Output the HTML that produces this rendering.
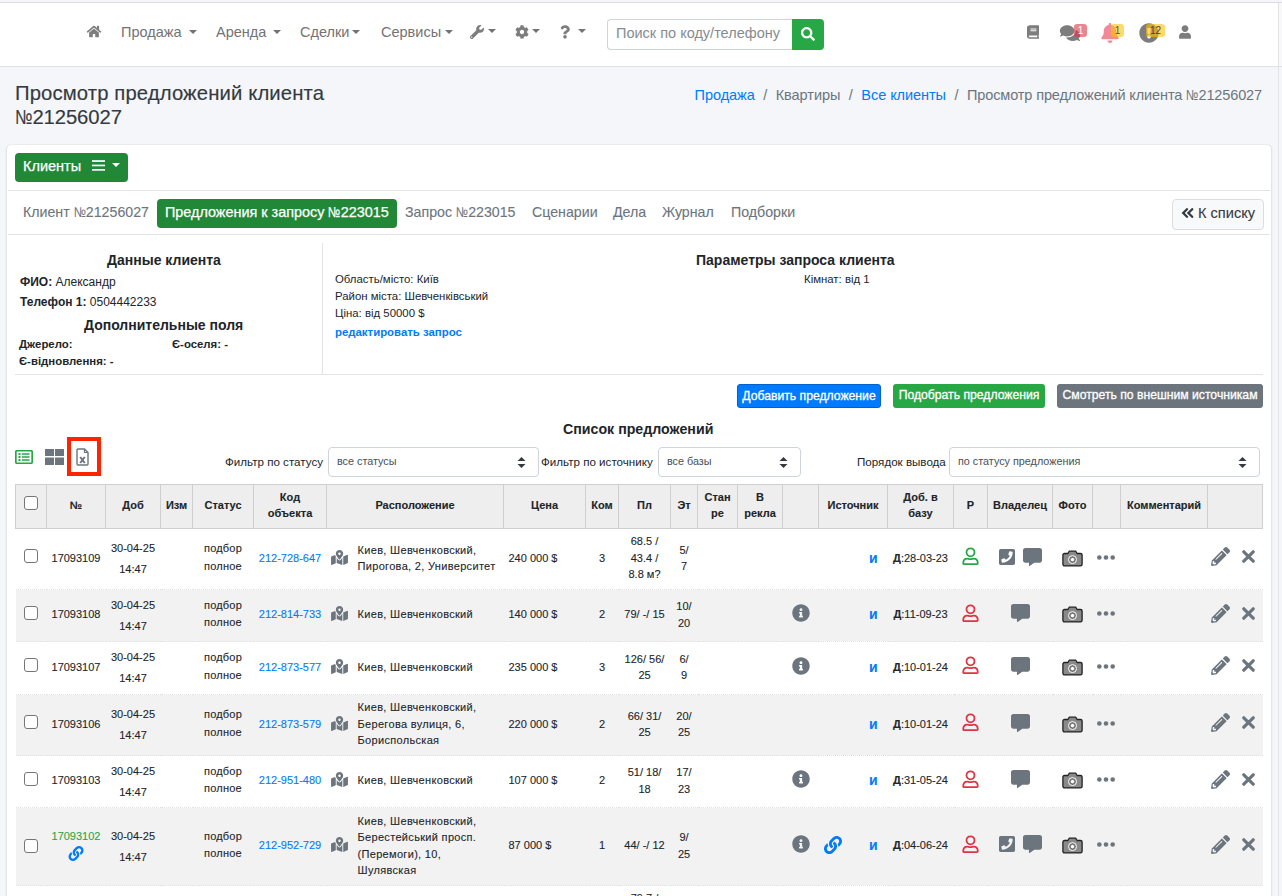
<!DOCTYPE html>
<html><head><meta charset="utf-8">
<style>
*{box-sizing:border-box}
html,body{margin:0;padding:0}
body{width:1282px;height:896px;overflow:hidden;position:relative;background:#f4f6f9;font-family:"Liberation Sans",sans-serif;color:#212529}
.abs{position:absolute}
.nav{position:absolute;left:0;top:2px;width:1282px;height:65px;background:#fff;border-top:1px solid #dcdce0;border-bottom:1px solid #dee2e6}
.ni{position:absolute;top:24px;font-size:14.5px;line-height:17px;color:#737373;white-space:nowrap}
.caret{display:inline-block;width:0;height:0;border-left:4px solid transparent;border-right:4px solid transparent;border-top:4.5px solid #737373;vertical-align:3px}
.title{position:absolute;left:15px;top:81px;font-size:20.3px;letter-spacing:.12px;-webkit-text-stroke:.15px currentColor;line-height:24px;color:#343a40}
.bc{position:absolute;right:20px;top:87px;font-size:14.5px;letter-spacing:-.05px;line-height:17px;color:#6c757d;white-space:nowrap}
.bc a{color:#007bff;text-decoration:none}
.bc .sep{padding:0 8.5px;color:#6c757d}
.card{position:absolute;left:7px;top:145px;width:1264px;height:800px;background:#fff;border-radius:4px;box-shadow:0 0 1px rgba(0,0,0,.2),0 1px 3px rgba(0,0,0,.15)}
.btn-cl{position:absolute;left:15px;top:153px;width:113px;height:29px;background:#218838;border-radius:4px;color:#fff;font-size:14.5px;line-height:27px;padding-left:8px;-webkit-text-stroke:.25px #fff}
.hr{position:absolute;height:1px;background:#e3e3e3}
.tab{position:absolute;top:204px;font-size:14.2px;line-height:17px;color:#6c757d;white-space:nowrap;-webkit-text-stroke:.1px currentColor}
.pill{position:absolute;left:157px;top:199px;width:240px;height:29px;background:#218838;border-radius:4px}
.tk{position:absolute;left:1172px;top:199px;width:92px;height:31px;background:#f8f9fa;border:1px solid #ddd;border-radius:4px}
.t11{font-size:11.4px;line-height:17px;white-space:nowrap}
.b14{font-weight:bold;font-size:14px;line-height:17px;white-space:nowrap}
.sbtn{position:absolute;top:384px;height:24px;border-radius:3px;color:#fff;font-size:12.2px;line-height:22px;-webkit-text-stroke:.3px #fff;text-align:center;white-space:nowrap}
.lbl{position:absolute;top:454.5px;font-size:11.6px;line-height:14px;color:#212529;white-space:nowrap}
.sel{position:absolute;top:447px;height:30px;border:1px solid #ced4da;border-radius:4px;background:#fff;font-size:10.8px;line-height:26px;padding-left:8px;color:#495057;white-space:nowrap}
.sel svg{position:absolute;right:12px;top:9px}
table.tb{position:absolute;left:15px;top:484px;border-collapse:collapse;table-layout:fixed;width:1248px;font-size:11px;color:#212529;-webkit-text-stroke:.1px currentColor}
.tb th{background:#eee;border:1px solid #cfcfcf;font-weight:bold;font-size:11px;line-height:16px;height:44px;padding:0 2px 4px;text-align:center;vertical-align:middle}
.tb td{vertical-align:middle;text-align:center;padding:0 4px 2px;line-height:16.5px;border-top:1px dotted #e2e2e2}
.tb .cb{position:relative;top:-2.5px}
.tb td .ico{position:relative;top:-1.5px}
.tb td.loc .ico{top:-1px}
.tb td .cam{top:0}
.tb tr.g td{background:#f2f2f2}
.cb{display:inline-block;width:14px;height:14px;border:1px solid #767676;border-radius:3px;background:#fff;vertical-align:middle}
.lnk{color:#007bff}
.dt div{line-height:21px;position:relative;top:1px}
.ico{display:inline-block;vertical-align:middle}
.tb td.loc{text-align:left;padding:0 4px 2px}
.lf{display:flex;align-items:center}
.lf svg{margin:0 10px 0 0;flex:none}
.lt{letter-spacing:.32px}
.tb td.pr{text-align:left;padding-left:5px}
.tb td.src{text-align:right;padding-right:10px;position:relative}
.lk6{position:absolute;left:4px;top:50%;margin-top:-9px}
.tb td.dd{white-space:nowrap;padding:0 0 2px}
.tb td.et{padding:0 3px 2px}
.tb td.act{padding:0 6px 2px 2px;white-space:nowrap}
.no{display:inline-block;transform:scaleX(.8);transform-origin:0 0;margin-right:-.215em}
</style></head><body>

<!-- NAVBAR -->
<div class="nav"></div>
<svg class="abs" style="left:86px;top:25px" width="16" height="13" viewBox="0 0 576 512"><path fill="#7d7d7d" d="M280.37 148.26L96 300.11V464a16 16 0 0 0 16 16l112.06-.29a16 16 0 0 0 15.92-16V368a16 16 0 0 1 16-16h64a16 16 0 0 1 16 16v95.64a16 16 0 0 0 16 16.05L464 480a16 16 0 0 0 16-16V300L295.67 148.26a12.190 12.190 0 0 0-15.3 0zM571.6 251.47L488 182.56V44.05a12 12 0 0 0-12-12h-56a12 12 0 0 0-12 12v72.61L318.47 43a48 48 0 0 0-61 0L4.34 251.47a12 12 0 0 0-1.6 16.9l25.5 31A12 12 0 0 0 45.15 301l235.22-193.74a12.19 12.19 0 0 1 15.3 0L530.9 301a12 12 0 0 0 16.9-1.6l25.5-31a12 12 0 0 0-1.7-16.93z"/></svg>
<div class="ni" style="left:121px">Продажа <span class="caret" style="margin-left:3px"></span></div>
<div class="ni" style="left:216px">Аренда <span class="caret" style="margin-left:3px"></span></div>
<div class="ni" style="left:300px">Сделки<span class="caret" style="margin-left:3px"></span></div>
<div class="ni" style="left:381px">Сервисы<span class="caret" style="margin-left:4px"></span></div>
<svg class="abs" style="left:470px;top:25px" width="14" height="14" viewBox="0 0 512 512"><path fill="#7d7d7d" d="M507.73 109.1c-2.24-9.030-13.54-12.09-20.120-5.51l-74.36 74.36-67.88-11.31-11.31-67.88 74.36-74.36c6.62-6.62 3.43-17.9-5.66-20.16-47.38-11.74-99.55.91-136.58 37.93-39.64 39.64-50.55 97.1-34.05 147.2L18.74 402.76c-24.99 24.99-24.99 65.51 0 90.5 24.99 24.99 65.51 24.99 90.5 0l213.21-213.21c50.12 16.71 107.47 5.68 147.37-34.22 37.07-37.07 49.7-89.32 37.91-136.73zM64 472c-13.25 0-24-10.75-24-24 0-13.26 10.75-24 24-24s24 10.74 24 24c0 13.250-10.75 24-24 24z"/></svg>
<span class="caret abs" style="left:488px;top:29px"></span>
<svg class="abs" style="left:515px;top:25px" width="14" height="14" viewBox="0 0 512 512"><path fill="#7d7d7d" d="M487.4 315.7l-42.6-24.6c4.3-23.2 4.3-47 0-70.2l42.6-24.6c4.9-2.8 7.1-8.6 5.5-14-11.1-35.6-30-67.8-54.7-94.6-3.8-4.1-10-5.1-14.8-2.3L380.8 110c-17.9-15.4-38.5-27.3-60.8-35.1V25.8c0-5.6-3.9-10.5-9.4-11.7-36.7-8.2-74.3-7.8-109.2 0-5.5 1.2-9.4 6.1-9.4 11.7V75c-22.2 7.9-42.8 19.8-60.8 35.1L88.7 85.5c-4.9-2.8-11-1.9-14.8 2.3-24.7 26.7-43.6 58.9-54.7 94.6-1.7 5.4.6 11.2 5.5 14L67.3 221c-4.3 23.2-4.3 47 0 70.2l-42.6 24.6c-4.9 2.8-7.1 8.6-5.5 14 11.1 35.6 30 67.8 54.7 94.6 3.8 4.1 10 5.1 14.8 2.3l42.6-24.6c17.9 15.4 38.5 27.3 60.8 35.1v49.2c0 5.6 3.9 10.5 9.4 11.7 36.7 8.2 74.3 7.8 109.2 0 5.5-1.2 9.4-6.1 9.4-11.7v-49.2c22.2-7.9 42.8-19.8 60.8-35.1l42.6 24.6c4.9 2.8 11 1.9 14.8-2.3 24.7-26.7 43.6-58.9 54.7-94.6 1.5-5.5-.7-11.3-5.6-14.1zM256 336c-44.1 0-80-35.9-80-80s35.9-80 80-80 80 35.9 80 80-35.9 80-80 80z"/></svg>
<span class="caret abs" style="left:532px;top:29px"></span>
<svg class="abs" style="left:560px;top:25px" width="10" height="14" viewBox="0 0 384 512"><path fill="#7d7d7d" d="M202.021 0C122.202 0 70.503 32.703 29.914 91.026c-7.363 10.580-5.093 25.086 5.178 32.874l43.138 32.709c10.373 7.865 25.132 6.026 33.253-4.148 25.049-31.381 43.63-49.449 82.757-49.449 30.764 0 68.816 19.799 68.816 49.631 0 22.552-18.617 34.134-48.993 51.164-35.423 19.86-82.299 44.576-82.299 106.405V320c0 13.255 10.745 24 24 24h72.471c13.255 0 24-10.745 24-24v-5.773c0-42.86 125.268-44.645 125.268-160.627C377.504 66.256 286.902 0 202.021 0zM192 373.459c-38.196 0-69.271 31.075-69.271 69.271 0 38.195 31.075 69.27 69.271 69.270s69.271-31.075 69.271-69.271-31.075-69.27-69.271-69.27z"/></svg>
<span class="caret abs" style="left:578px;top:29px"></span>
<div class="abs" style="left:607px;top:19px;width:186px;height:31px;border:1px solid #ced4da;border-right:0;border-radius:4px 0 0 4px;background:#fff;font-size:14.5px;line-height:27px;padding-left:8px;color:#868b91;white-space:nowrap;overflow:hidden">Поиск по коду/телефону</div>
<div class="abs" style="left:792px;top:19px;width:32px;height:31px;background:#28a745;border-radius:0 4px 4px 0"></div>
<svg class="abs" style="left:801px;top:27px" width="14" height="14" viewBox="0 0 512 512"><path fill="#fff" d="M505 442.7L405.3 343c-4.5-4.5-10.6-7-17-7H372c27.6-35.3 44-79.7 44-128C416 93.1 322.9 0 208 0S0 93.1 0 208s93.1 208 208 208c48.3 0 92.7-16.4 128-44v16.3c0 6.4 2.5 12.5 7 17l99.7 99.7c9.4 9.4 24.6 9.4 33.9 0l28.3-28.3c9.4-9.4 9.4-24.6.1-34zM208 336c-70.7 0-128-57.2-128-128 0-70.7 57.2-128 128-128 70.7 0 128 57.2 128 128 0 70.7-57.2 128-128 128z"/></svg>

<!-- right nav icons -->
<svg class="abs" style="left:1027px;top:25px" width="12" height="14" viewBox="0 0 448 512"><path fill="#7d7d7d" d="M448 360V24c0-13.3-10.7-24-24-24H96C43 0 0 43 0 96v320c0 53 43 96 96 96h328c13.3 0 24-10.7 24-24v-16c0-7.5-3.5-14.3-8.9-18.7-4.2-15.4-4.2-59.3 0-74.7 5.4-4.3 8.9-11.1 8.9-18.6zM128 134c0-3.3 2.7-6 6-6h212c3.3 0 6 2.7 6 6v20c0 3.3-2.7 6-6 6H134c-3.3 0-6-2.7-6-6v-20zm0 64c0-3.3 2.7-6 6-6h212c3.3 0 6 2.7 6 6v20c0 3.3-2.7 6-6 6H134c-3.3 0-6-2.7-6-6v-20zm253.4 250H96c-17.7 0-32-14.3-32-32 0-17.6 14.4-32 32-32h285.4c-1.9 17.1-1.9 46.9 0 64z"/></svg>
<svg class="abs" style="left:1058px;top:24px" width="24" height="18" viewBox="0 0 576 512"><path fill="#7d7d7d" d="M416 192c0-88.4-93.1-160-208-160S0 103.6 0 192c0 34.3 14.1 65.9 38 92-13.4 30.2-35.5 54.2-35.8 54.5-2.2 2.3-2.8 5.7-1.5 8.7S4.8 352 8 352c36.6 0 66.9-12.3 88.7-25 32.2 15.7 70.3 25 111.3 25 114.9 0 208-71.6 208-160zm122 220c23.9-26 38-57.7 38-92 0-66.9-53.5-124.2-129.3-148.1.9 6.6 1.3 13.3 1.3 20.1 0 105.9-107.7 192-240 192-10.8 0-21.3-.8-31.7-1.9C207.8 439.6 281.8 480 368 480c41 0 79.1-9.2 111.3-25 21.8 12.7 52.1 25 88.7 25 3.2 0 6.1-1.9 7.3-4.8 1.3-2.9.7-6.3-1.5-8.7-.3-.3-22.4-24.2-35.8-54.5z"/></svg>
<div class="abs" style="left:1074px;top:24px;width:13px;height:13px;background:rgba(220,53,69,.6);border-radius:3px;color:#fff;font-size:10px;line-height:13px;text-align:center">1</div>
<svg class="abs" style="left:1101px;top:23px" width="18" height="20" viewBox="0 0 448 512"><path fill="#f08a96" d="M224 512c35.32 0 63.97-28.65 63.97-64H160.03c0 35.35 28.65 64 63.97 64zm215.39-149.71c-19.32-20.760-55.47-51.99-55.47-154.29 0-77.7-54.48-139.9-127.94-155.16V32c0-17.67-14.32-32-31.98-32s-31.98 14.33-31.98 32v20.84C118.56 68.1 64.08 130.3 64.08 208c0 102.3-36.15 133.53-55.47 154.29-6 6.45-8.66 14.16-8.61 21.71.11 16.4 12.98 32 32.1 32h383.8c19.12 0 32-15.6 32.1-32 .05-7.55-2.61-15.27-8.61-21.71z"/></svg>
<div class="abs" style="left:1111px;top:24px;width:13px;height:13px;background:rgba(255,193,7,.6);border-radius:3px;color:#555;font-size:10px;line-height:13px;text-align:center">1</div>
<svg class="abs" style="left:1139px;top:23px" width="20" height="20" viewBox="0 0 512 512"><path fill="#7d7d7d" d="M504 256c0 136.997-111.043 248-248 248S8 392.997 8 256C8 119.083 119.043 8 256 8s248 111.083 248 248zm-248 50c-25.405 0-46 20.595-46 46s20.595 46 46 46 46-20.595 46-46-20.595-46-46-46zm-43.673-165.346l7.418 136c.347 6.364 5.609 11.346 11.982 11.346h48.546c6.373 0 11.635-4.982 11.982-11.346l7.418-136c.375-6.874-5.098-12.654-11.982-12.654h-63.383c-6.884 0-12.356 5.78-11.981 12.654z"/></svg>
<div class="abs" style="left:1146px;top:24px;width:19px;height:13px;background:rgba(255,193,7,.6);border-radius:3px;color:#444;font-size:10px;line-height:13px;text-align:center">12</div>
<svg class="abs" style="left:1179px;top:25px" width="12" height="14" viewBox="0 0 448 512"><path fill="#7d7d7d" d="M224 256c70.7 0 128-57.3 128-128S294.7 0 224 0 96 57.3 96 128s57.3 128 128 128zm89.6 32h-16.7c-22.2 10.2-46.9 16-72.9 16s-50.6-5.8-72.9-16h-16.7C60.2 288 0 348.2 0 422.4V464c0 26.5 21.5 48 48 48h352c26.5 0 48-21.5 48-48v-41.6c0-74.2-60.2-134.4-134.4-134.4z"/></svg>
<div class="abs" style="left:1278px;top:3px;width:1px;height:893px;background:#e3e3e8"></div><div class="abs" style="left:1279px;top:3px;width:3px;height:63px;background:#f8f8fa"></div>

<!-- HEADER -->
<div class="title">Просмотр предложений клиента<br><span class="no" style="letter-spacing:0">№</span><span style="letter-spacing:-.1px">21256027</span></div>
<div class="bc"><a>Продажа</a><span class="sep">/</span>Квартиры<span class="sep">/</span><a>Все клиенты</a><span class="sep">/</span><span style="letter-spacing:-.12px">Просмотр предложений клиента <span class="no">№</span>21256027</span></div>

<!-- CARD -->
<div class="card"></div>
<div class="btn-cl">Клиенты
<svg class="abs" style="left:77px;top:7px" width="13" height="11" viewBox="0 0 13 11"><rect y="0.2" width="13" height="1.7" fill="#fff"/><rect y="4.6" width="13" height="1.7" fill="#fff"/><rect y="9" width="13" height="1.7" fill="#fff"/></svg>
<span class="caret abs" style="left:97px;top:10px;border-top-color:#fff"></span>
</div>
<div class="hr" style="left:8px;top:190px;width:1262px"></div>
<div class="tab" style="left:23px">Клиент <span class="no">№</span>21256027</div>
<div class="pill"></div>
<div class="tab" style="left:165px;color:#fff;font-size:14.4px;-webkit-text-stroke:.25px #fff">Предложения к запросу <span class="no">№</span>223015</div>
<div class="tab" style="left:405px">Запрос <span class="no">№</span>223015</div>
<div class="tab" style="left:532px">Сценарии</div>
<div class="tab" style="left:613px">Дела</div>
<div class="tab" style="left:662px">Журнал</div>
<div class="tab" style="left:731px">Подборки</div>
<div class="tk"></div>
<svg class="abs" style="left:1181px;top:207.5px" width="13" height="10" viewBox="0 0 13 10"><path d="M6 1.2L2.2 5 6 8.8M11.2 1.2L7.4 5l3.8 3.8" fill="none" stroke="#343a40" stroke-width="2.3" stroke-linecap="round"/></svg>
<div class="tab" style="left:1198px;top:205px;color:#343a40;font-size:14.6px">К списку</div>
<div class="hr" style="left:8px;top:234px;width:1262px"></div>

<!-- DATA BLOCK -->
<div class="abs" style="left:322px;top:243px;width:1px;height:131px;background:#e3e3e3"></div>
<div class="hr" style="left:15px;top:374px;width:1248px"></div>
<div class="abs b14" style="left:107px;top:252px">Данные клиента</div>
<div class="abs t11" style="left:20px;top:274px;font-size:12px"><b>ФИО:</b> Александр</div>
<div class="abs t11" style="left:20px;top:294px;font-size:12px"><b>Телефон 1:</b> 0504442233</div>
<div class="abs b14" style="left:84px;top:317px">Дополнительные поля</div>
<div class="abs t11" style="left:19px;top:336px;font-weight:bold;font-size:11.4px">Джерело:</div>
<div class="abs t11" style="left:172px;top:336px;font-weight:bold;font-size:11.4px">Є-оселя: -</div>
<div class="abs t11" style="left:19px;top:353px;font-weight:bold;font-size:11.4px">Є-відновлення: -</div>

<div class="abs b14" style="left:696px;top:252px">Параметры запроса клиента</div>
<div class="abs t11" style="left:804px;top:271px">Кімнат: від 1</div>
<div class="abs t11" style="left:335px;top:271px">Область/місто: Київ</div>
<div class="abs t11" style="left:335px;top:288px">Район міста: Шевченківський</div>
<div class="abs t11" style="left:335px;top:305px">Ціна: від 50000 $</div>
<div class="abs t11" style="left:335px;top:324px;font-weight:bold;color:#007bff">редактировать запрос</div>

<!-- BUTTONS -->
<div class="sbtn" style="left:737px;width:144px;background:#007bff;border:1px solid #0062cc">Добавить предложение</div>
<div class="sbtn" style="left:893px;width:152px;background:#28a745">Подобрать предложения</div>
<div class="sbtn" style="left:1057px;width:206px;background:#6c757d">Смотреть по внешним источникам</div>

<div class="abs b14" style="left:563px;top:421px;font-size:14.2px">Список предложений</div>

<!-- view icons -->
<svg class="abs" style="left:15px;top:449px" width="18" height="16" viewBox="0 0 512 512" preserveAspectRatio="none"><path fill="#28a745" d="M464 32H48C21.49 32 0 53.49 0 80v352c0 26.51 21.49 48 48 48h416c26.51 0 48-21.49 48-48V80c0-26.51-21.49-48-48-48zm-6 400H54a6 6 0 0 1-6-6V86a6 6 0 0 1 6-6h404a6 6 0 0 1 6 6v340a6 6 0 0 1-6 6zm-42-92v24c0 6.627-5.373 12-12 12H204c-6.627 0-12-5.373-12-12v-24c0-6.627 5.373-12 12-12h200c6.627 0 12 5.373 12 12zm0-96v24c0 6.627-5.373 12-12 12H204c-6.627 0-12-5.373-12-12v-24c0-6.627 5.373-12 12-12h200c6.627 0 12 5.373 12 12zm0-96v24c0 6.627-5.373 12-12 12H204c-6.627 0-12-5.373-12-12v-24c0-6.627 5.373-12 12-12h200c6.627 0 12 5.373 12 12zm-252 12c0 19.882-16.118 36-36 36s-36-16.118-36-36 16.118-36 36-36 36 16.118 36 36zm0 96c0 19.882-16.118 36-36 36s-36-16.118-36-36 16.118-36 36-36 36 16.118 36 36zm0 96c0 19.882-16.118 36-36 36s-36-16.118-36-36 16.118-36 36-36 36 16.118 36 36z"/></svg>
<svg class="abs" style="left:45px;top:449px" width="19" height="16" viewBox="0 0 19 16"><rect x="0" y="0" width="9" height="7" fill="#6c757d"/><rect x="10" y="0" width="9" height="7" fill="#6c757d"/><rect x="0" y="8.5" width="9" height="7.5" fill="#6c757d"/><rect x="10" y="8.5" width="9" height="7.5" fill="#6c757d"/></svg>
<div class="abs" style="left:67px;top:437px;width:34px;height:39px;border:4px solid #ff2400"></div>
<svg class="abs" style="left:76px;top:448px" width="13" height="18" viewBox="0 0 13 18"><path d="M1 2a1 1 0 0 1 1-1h6.5L12 4.5V16a1 1 0 0 1-1 1H2a1 1 0 0 1-1-1z" fill="none" stroke="#6c757d" stroke-width="1.4"/><path d="M8.5 1v3.5H12" fill="none" stroke="#6c757d" stroke-width="1.2"/><path d="M4.2 9l4.6 6M8.8 9l-4.6 6" stroke="#6c757d" stroke-width="2"/></svg>

<!-- FILTERS -->
<div class="lbl" style="left:225px">Фильтр по статусу</div>
<div class="sel" style="left:328px;width:211px">все статусы<svg width="9" height="11" viewBox="0 0 9 11"><path d="M4.5 0L8.5 4H.5z M4.5 11L.5 7h8z" fill="#343a40"/></svg></div>
<div class="lbl" style="left:541px">Фильтр по источнику</div>
<div class="sel" style="left:658px;width:143px">все базы<svg width="9" height="11" viewBox="0 0 9 11"><path d="M4.5 0L8.5 4H.5z M4.5 11L.5 7h8z" fill="#343a40"/></svg></div>
<div class="lbl" style="left:857px">Порядок вывода</div>
<div class="sel" style="left:949px;width:311px">по статусу предложения<svg width="9" height="11" viewBox="0 0 9 11"><path d="M4.5 0L8.5 4H.5z M4.5 11L.5 7h8z" fill="#343a40"/></svg></div>

<!-- TABLE -->
<table class="tb">
<colgroup><col style="width:31px"><col style="width:59px"><col style="width:55px"><col style="width:32px"><col style="width:61px"><col style="width:73px"><col style="width:177px"><col style="width:82px"><col style="width:33px"><col style="width:52px"><col style="width:27px"><col style="width:40px"><col style="width:45px"><col style="width:36px"><col style="width:69px"><col style="width:66px"><col style="width:34px"><col style="width:65px"><col style="width:40px"><col style="width:28px"><col style="width:87px"><col style="width:55px"></colgroup>
<tr><th><span class="cb"></span></th><th>№</th><th>Доб</th><th>Изм</th><th>Статус</th><th>Код<br>объекта</th><th>Расположение</th><th>Цена</th><th>Ком</th><th>Пл</th><th>Эт</th><th>Стан<br>ре</th><th>В<br>рекла</th><th></th><th>Источник</th><th>Доб. в<br>базу</th><th>Р</th><th>Владелец</th><th>Фото</th><th></th><th>Комментарий</th><th></th></tr>
<tr style="height:61px"><td><span class="cb"></span></td><td class="nb">17093109</td><td class="dt"><div>30-04-25</div><div>14:47</div></td><td></td><td><span style="position:relative;top:-0.5px;letter-spacing:.2px;display:inline-block;line-height:17.5px">подбор<br>полное</span></td><td><span class="lnk">212-728-647</span></td><td class="loc"><div class="lf"><svg class="ico" width="17" height="15" viewBox="0 0 576 512"><path fill="#6c757d" d="M288 0c-69.59 0-126 56.41-126 126 0 56.26 82.35 158.8 113.9 196.02 6.39 7.54 17.82 7.54 24.2 0C331.650 284.8 414 182.26 414 126 414 56.41 357.59 0 288 0zm0 168c-23.2 0-42-18.8-42-42s18.8-42 42-42 42 18.8 42 42-18.8 42-42 42zM20.12 215.95A32.006 32.006 0 0 0 0 245.66v250.32c0 11.32 11.43 19.06 21.94 14.86L160 448V214.92c-8.84-15.98-16.07-31.54-21.25-46.42L20.12 215.95zM288 359.67c-14.07 0-27.38-6.18-36.51-16.96-19.66-23.2-40.57-49.62-59.49-76.72v182l192 64V266c-18.92 27.09-39.82 53.52-59.49 76.72-9.13 10.77-22.44 16.95-36.51 16.95zm266.06-198.51L416 224v288l139.88-55.95A31.996 31.996 0 0 0 576 426.34V176.02c0-11.32-11.430-19.06-21.94-14.86z"/></svg><div class="lt">Киев, Шевченковский,<br>Пирогова, 2, Университет</div></div></td><td class="pr">240 000 $</td><td>3</td><td>68.5 /<br>43.4 /<br>8.8 м?</td><td class="et">5/<br>7</td><td></td><td></td><td></td><td class="src"><b class="lnk" style="font-size:14px;position:relative;top:0.5px">и</b></td><td class="dd"><b>Д</b>:28-03-23</td><td><svg class="ico" width="17" height="19" viewBox="0 0 17 19"><circle cx="8.5" cy="5.3" r="4" fill="none" stroke="#28a745" stroke-width="1.8"/><path d="M2.1 17.2c-.5 0-.9-.4-.9-.9 0-2.8 1.6-4.7 4-4.7 1.1 0 1.8.6 3.3.6s2.2-.6 3.300-.6c2.4 0 4 1.9 4 4.7 0 .5-.4.9-.9.9z" fill="none" stroke="#28a745" stroke-width="1.8" stroke-linejoin="round"/></svg></td><td><svg class="ico" width="16" height="16" viewBox="0 32 448 448"><path fill="#6c757d" d="M400 32H48C21.49 32 0 53.49 0 80v352c0 26.51 21.49 48 48 48h352c26.51 0 48-21.49 48-48V80c0-26.51-21.49-48-48-48zM94 416c-7.033 0-13.057-4.873-14.616-11.627l-14.998-65a15 15 0 0 1 8.707-17.16l69.998-29.999a15 15 0 0 1 17.518 4.289l30.997 37.885c48.944-22.963 88.297-62.858 110.781-110.78l-37.886-30.997a15.001 15.001 0 0 1-4.289-17.518l30-69.998a15 15 0 0 1 17.16-8.707l65 14.998A14.997 14.997 0 0 1 384 126c0 160.292-129.945 290-290 290z"/></svg><span style="display:inline-block;width:8px"></span><svg class="ico" width="19" height="18" viewBox="0 0 512 512" preserveAspectRatio="none"><path fill="#6c757d" d="M448 0H64C28.7 0 0 28.7 0 64v288c0 35.3 28.7 64 64 64h96v84c0 9.8 11.2 15.5 19.1 9.7L304 416h144c35.3 0 64-28.7 64-64V64c0-35.3-28.7-64-64-64z"/></svg></td><td><svg class="ico cam" width="21" height="17" viewBox="0 0 21 17"><path d="M7.2 1.2h6.6l1.3 2.3h3.4c.9 0 1.6.7 1.6 1.6v9.2c0 .9-.7 1.6-1.6 1.6H2.5c-.9 0-1.6-.7-1.6-1.6V5.1c0-.9.7-1.6 1.6-1.6h3.4z" fill="#8a8a8a" stroke="#222" stroke-width="1.3" stroke-linejoin="round"/><circle cx="10.5" cy="9.6" r="4" fill="#777" stroke="#fff" stroke-width="1"/><circle cx="10.5" cy="9.6" r="2.2" fill="#fff" stroke="#666" stroke-width=".8"/></svg></td><td><svg class="ico" style="left:-1px" width="18" height="5" viewBox="0 0 18 5"><circle cx="2.3" cy="2.5" r="2.3" fill="#6c757d"/><circle cx="9" cy="2.5" r="2.3" fill="#6c757d"/><circle cx="15.7" cy="2.5" r="2.3" fill="#6c757d"/></svg></td><td></td><td class="act"><svg class="ico" width="19" height="19" viewBox="0 0 512 512"><path fill="#6c757d" d="M497.9 142.1l-46.1 46.1c-4.7 4.7-12.3 4.7-17 0l-111-111c-4.7-4.7-4.7-12.3 0-17l46.1-46.1c18.7-18.7 49.1-18.7 67.9 0l60.1 60.1c18.8 18.7 18.8 49.1 0 67.9zM284.2 99.8L21.6 362.4.4 483.9c-2.9 16.4 11.4 30.6 27.8 27.8l121.5-21.3 262.6-262.6c4.7-4.7 4.7-12.3 0-17l-111-111c-4.8-4.7-12.4-4.7-17.1 0zM124.1 339.9c-5.5-5.5-5.5-14.3 0-19.8l154-154c5.5-5.5 14.3-5.5 19.8 0s5.5 14.3 0 19.8l-154 154c-5.5 5.5-14.3 5.5-19.8 0zM88 424h48v36.3l-64.5 11.3-31.1-31.1L51.7 376H88v48z"/></svg><span style="display:inline-block;width:12px"></span><svg class="ico" width="13" height="13" viewBox="0 0 13 13"><path d="M1.8 1.8l9.4 9.4M11.2 1.8l-9.4 9.4" stroke="#6c757d" stroke-width="3.2" stroke-linecap="round"/></svg></td></tr>
<tr class="g" style="height:52px"><td><span class="cb"></span></td><td class="nb">17093108</td><td class="dt"><div>30-04-25</div><div>14:47</div></td><td></td><td><span style="position:relative;top:-0.5px;letter-spacing:.2px;display:inline-block;line-height:17.5px">подбор<br>полное</span></td><td><span class="lnk">212-814-733</span></td><td class="loc"><div class="lf"><svg class="ico" width="17" height="15" viewBox="0 0 576 512"><path fill="#6c757d" d="M288 0c-69.59 0-126 56.41-126 126 0 56.26 82.35 158.8 113.9 196.02 6.39 7.54 17.82 7.54 24.2 0C331.650 284.8 414 182.26 414 126 414 56.41 357.59 0 288 0zm0 168c-23.2 0-42-18.8-42-42s18.8-42 42-42 42 18.8 42 42-18.8 42-42 42zM20.12 215.95A32.006 32.006 0 0 0 0 245.66v250.32c0 11.32 11.43 19.06 21.94 14.86L160 448V214.92c-8.84-15.98-16.07-31.54-21.25-46.42L20.12 215.95zM288 359.67c-14.07 0-27.38-6.18-36.51-16.96-19.66-23.2-40.57-49.62-59.49-76.72v182l192 64V266c-18.92 27.09-39.82 53.52-59.49 76.72-9.13 10.77-22.44 16.95-36.51 16.95zm266.06-198.51L416 224v288l139.88-55.95A31.996 31.996 0 0 0 576 426.34V176.02c0-11.32-11.430-19.06-21.94-14.86z"/></svg><div class="lt">Киев, Шевченковский</div></div></td><td class="pr">140 000 $</td><td>2</td><td>79/ -/ 15</td><td class="et">10/<br>20</td><td></td><td></td><td><svg class="ico" width="18" height="18" viewBox="0 0 512 512"><path fill="#6c757d" d="M256 8C119.043 8 8 119.083 8 256c0 136.997 111.043 248 248 248s248-111.003 248-248C504 119.083 392.957 8 256 8zm0 110c23.196 0 42 18.804 42 42s-18.804 42-42 42-42-18.804-42-42 18.804-42 42-42zm56 254c0 6.627-5.373 12-12 12h-88c-6.627 0-12-5.373-12-12v-24c0-6.627 5.373-12 12-12h12v-64h-12c-6.627 0-12-5.373-12-12v-24c0-6.627 5.373-12 12-12h64c6.627 0 12 5.373 12 12v100h12c6.627 0 12 5.373 12 12v24z"/></svg></td><td class="src"><b class="lnk" style="font-size:14px;position:relative;top:0.5px">и</b></td><td class="dd"><b>Д</b>:11-09-23</td><td><svg class="ico" width="17" height="19" viewBox="0 0 17 19"><circle cx="8.5" cy="5.3" r="4" fill="none" stroke="#dc3545" stroke-width="1.8"/><path d="M2.1 17.2c-.5 0-.9-.4-.9-.9 0-2.8 1.6-4.7 4-4.7 1.1 0 1.8.6 3.3.6s2.2-.6 3.300-.6c2.4 0 4 1.9 4 4.7 0 .5-.4.9-.9.9z" fill="none" stroke="#dc3545" stroke-width="1.8" stroke-linejoin="round"/></svg></td><td><svg class="ico" width="19" height="18" viewBox="0 0 512 512" preserveAspectRatio="none"><path fill="#6c757d" d="M448 0H64C28.7 0 0 28.7 0 64v288c0 35.3 28.7 64 64 64h96v84c0 9.8 11.2 15.5 19.1 9.7L304 416h144c35.3 0 64-28.7 64-64V64c0-35.3-28.7-64-64-64z"/></svg></td><td><svg class="ico cam" width="21" height="17" viewBox="0 0 21 17"><path d="M7.2 1.2h6.6l1.3 2.3h3.4c.9 0 1.6.7 1.6 1.6v9.2c0 .9-.7 1.6-1.6 1.6H2.5c-.9 0-1.6-.7-1.6-1.6V5.1c0-.9.7-1.6 1.6-1.6h3.4z" fill="#8a8a8a" stroke="#222" stroke-width="1.3" stroke-linejoin="round"/><circle cx="10.5" cy="9.6" r="4" fill="#777" stroke="#fff" stroke-width="1"/><circle cx="10.5" cy="9.6" r="2.2" fill="#fff" stroke="#666" stroke-width=".8"/></svg></td><td><svg class="ico" style="left:-1px" width="18" height="5" viewBox="0 0 18 5"><circle cx="2.3" cy="2.5" r="2.3" fill="#6c757d"/><circle cx="9" cy="2.5" r="2.3" fill="#6c757d"/><circle cx="15.7" cy="2.5" r="2.3" fill="#6c757d"/></svg></td><td></td><td class="act"><svg class="ico" width="19" height="19" viewBox="0 0 512 512"><path fill="#6c757d" d="M497.9 142.1l-46.1 46.1c-4.7 4.7-12.3 4.7-17 0l-111-111c-4.7-4.7-4.7-12.3 0-17l46.1-46.1c18.7-18.7 49.1-18.7 67.9 0l60.1 60.1c18.8 18.7 18.8 49.1 0 67.9zM284.2 99.8L21.6 362.4.4 483.9c-2.9 16.4 11.4 30.6 27.8 27.8l121.5-21.3 262.6-262.6c4.7-4.7 4.7-12.3 0-17l-111-111c-4.8-4.7-12.4-4.7-17.1 0zM124.1 339.9c-5.5-5.5-5.5-14.3 0-19.8l154-154c5.5-5.5 14.3-5.5 19.8 0s5.5 14.3 0 19.8l-154 154c-5.5 5.5-14.3 5.5-19.8 0zM88 424h48v36.3l-64.5 11.3-31.1-31.1L51.7 376H88v48z"/></svg><span style="display:inline-block;width:12px"></span><svg class="ico" width="13" height="13" viewBox="0 0 13 13"><path d="M1.8 1.8l9.4 9.4M11.2 1.8l-9.4 9.4" stroke="#6c757d" stroke-width="3.2" stroke-linecap="round"/></svg></td></tr>
<tr style="height:53px"><td><span class="cb"></span></td><td class="nb">17093107</td><td class="dt"><div>30-04-25</div><div>14:47</div></td><td></td><td><span style="position:relative;top:-0.5px;letter-spacing:.2px;display:inline-block;line-height:17.5px">подбор<br>полное</span></td><td><span class="lnk">212-873-577</span></td><td class="loc"><div class="lf"><svg class="ico" width="17" height="15" viewBox="0 0 576 512"><path fill="#6c757d" d="M288 0c-69.59 0-126 56.41-126 126 0 56.26 82.35 158.8 113.9 196.02 6.39 7.54 17.82 7.54 24.2 0C331.650 284.8 414 182.26 414 126 414 56.41 357.59 0 288 0zm0 168c-23.2 0-42-18.8-42-42s18.8-42 42-42 42 18.8 42 42-18.8 42-42 42zM20.12 215.95A32.006 32.006 0 0 0 0 245.66v250.32c0 11.32 11.43 19.06 21.94 14.86L160 448V214.92c-8.84-15.98-16.07-31.54-21.25-46.42L20.12 215.95zM288 359.67c-14.07 0-27.38-6.18-36.51-16.96-19.66-23.2-40.57-49.62-59.49-76.72v182l192 64V266c-18.92 27.09-39.82 53.52-59.49 76.72-9.13 10.77-22.44 16.95-36.51 16.95zm266.06-198.51L416 224v288l139.88-55.95A31.996 31.996 0 0 0 576 426.34V176.02c0-11.32-11.430-19.06-21.94-14.86z"/></svg><div class="lt">Киев, Шевченковский</div></div></td><td class="pr">235 000 $</td><td>3</td><td>126/ 56/<br>25</td><td class="et">6/<br>9</td><td></td><td></td><td><svg class="ico" width="18" height="18" viewBox="0 0 512 512"><path fill="#6c757d" d="M256 8C119.043 8 8 119.083 8 256c0 136.997 111.043 248 248 248s248-111.003 248-248C504 119.083 392.957 8 256 8zm0 110c23.196 0 42 18.804 42 42s-18.804 42-42 42-42-18.804-42-42 18.804-42 42-42zm56 254c0 6.627-5.373 12-12 12h-88c-6.627 0-12-5.373-12-12v-24c0-6.627 5.373-12 12-12h12v-64h-12c-6.627 0-12-5.373-12-12v-24c0-6.627 5.373-12 12-12h64c6.627 0 12 5.373 12 12v100h12c6.627 0 12 5.373 12 12v24z"/></svg></td><td class="src"><b class="lnk" style="font-size:14px;position:relative;top:0.5px">и</b></td><td class="dd"><b>Д</b>:10-01-24</td><td><svg class="ico" width="17" height="19" viewBox="0 0 17 19"><circle cx="8.5" cy="5.3" r="4" fill="none" stroke="#dc3545" stroke-width="1.8"/><path d="M2.1 17.2c-.5 0-.9-.4-.9-.9 0-2.8 1.6-4.7 4-4.7 1.1 0 1.8.6 3.3.6s2.2-.6 3.300-.6c2.4 0 4 1.9 4 4.7 0 .5-.4.9-.9.9z" fill="none" stroke="#dc3545" stroke-width="1.8" stroke-linejoin="round"/></svg></td><td><svg class="ico" width="19" height="18" viewBox="0 0 512 512" preserveAspectRatio="none"><path fill="#6c757d" d="M448 0H64C28.7 0 0 28.7 0 64v288c0 35.3 28.7 64 64 64h96v84c0 9.8 11.2 15.5 19.1 9.7L304 416h144c35.3 0 64-28.7 64-64V64c0-35.3-28.7-64-64-64z"/></svg></td><td><svg class="ico cam" width="21" height="17" viewBox="0 0 21 17"><path d="M7.2 1.2h6.6l1.3 2.3h3.4c.9 0 1.6.7 1.6 1.6v9.2c0 .9-.7 1.6-1.6 1.6H2.5c-.9 0-1.6-.7-1.6-1.6V5.1c0-.9.7-1.6 1.6-1.6h3.4z" fill="#8a8a8a" stroke="#222" stroke-width="1.3" stroke-linejoin="round"/><circle cx="10.5" cy="9.6" r="4" fill="#777" stroke="#fff" stroke-width="1"/><circle cx="10.5" cy="9.6" r="2.2" fill="#fff" stroke="#666" stroke-width=".8"/></svg></td><td><svg class="ico" style="left:-1px" width="18" height="5" viewBox="0 0 18 5"><circle cx="2.3" cy="2.5" r="2.3" fill="#6c757d"/><circle cx="9" cy="2.5" r="2.3" fill="#6c757d"/><circle cx="15.7" cy="2.5" r="2.3" fill="#6c757d"/></svg></td><td></td><td class="act"><svg class="ico" width="19" height="19" viewBox="0 0 512 512"><path fill="#6c757d" d="M497.9 142.1l-46.1 46.1c-4.7 4.7-12.3 4.7-17 0l-111-111c-4.7-4.7-4.7-12.3 0-17l46.1-46.1c18.7-18.7 49.1-18.7 67.9 0l60.1 60.1c18.8 18.7 18.8 49.1 0 67.9zM284.2 99.8L21.6 362.4.4 483.9c-2.9 16.4 11.4 30.6 27.8 27.8l121.5-21.3 262.6-262.6c4.7-4.7 4.7-12.3 0-17l-111-111c-4.8-4.7-12.4-4.7-17.1 0zM124.1 339.9c-5.5-5.5-5.5-14.3 0-19.8l154-154c5.5-5.5 14.3-5.5 19.8 0s5.5 14.3 0 19.8l-154 154c-5.5 5.5-14.3 5.5-19.8 0zM88 424h48v36.3l-64.5 11.3-31.1-31.1L51.7 376H88v48z"/></svg><span style="display:inline-block;width:12px"></span><svg class="ico" width="13" height="13" viewBox="0 0 13 13"><path d="M1.8 1.8l9.4 9.4M11.2 1.8l-9.4 9.4" stroke="#6c757d" stroke-width="3.2" stroke-linecap="round"/></svg></td></tr>
<tr class="g" style="height:61px"><td><span class="cb"></span></td><td class="nb">17093106</td><td class="dt"><div>30-04-25</div><div>14:47</div></td><td></td><td><span style="position:relative;top:-0.5px;letter-spacing:.2px;display:inline-block;line-height:17.5px">подбор<br>полное</span></td><td><span class="lnk">212-873-579</span></td><td class="loc"><div class="lf"><svg class="ico" width="17" height="15" viewBox="0 0 576 512"><path fill="#6c757d" d="M288 0c-69.59 0-126 56.41-126 126 0 56.26 82.35 158.8 113.9 196.02 6.39 7.54 17.82 7.54 24.2 0C331.650 284.8 414 182.26 414 126 414 56.41 357.59 0 288 0zm0 168c-23.2 0-42-18.8-42-42s18.8-42 42-42 42 18.8 42 42-18.8 42-42 42zM20.12 215.95A32.006 32.006 0 0 0 0 245.66v250.32c0 11.32 11.43 19.06 21.94 14.86L160 448V214.92c-8.84-15.98-16.07-31.54-21.25-46.42L20.12 215.95zM288 359.67c-14.07 0-27.38-6.18-36.51-16.96-19.66-23.2-40.57-49.62-59.49-76.72v182l192 64V266c-18.92 27.09-39.82 53.52-59.49 76.72-9.13 10.77-22.44 16.95-36.51 16.95zm266.06-198.51L416 224v288l139.88-55.95A31.996 31.996 0 0 0 576 426.34V176.02c0-11.32-11.430-19.06-21.94-14.86z"/></svg><div class="lt">Киев, Шевченковский,<br>Берегова вулиця, 6,<br>Бориспольская</div></div></td><td class="pr">220 000 $</td><td>2</td><td>66/ 31/<br>25</td><td class="et">20/<br>25</td><td></td><td></td><td></td><td class="src"><b class="lnk" style="font-size:14px;position:relative;top:0.5px">и</b></td><td class="dd"><b>Д</b>:10-01-24</td><td><svg class="ico" width="17" height="19" viewBox="0 0 17 19"><circle cx="8.5" cy="5.3" r="4" fill="none" stroke="#dc3545" stroke-width="1.8"/><path d="M2.1 17.2c-.5 0-.9-.4-.9-.9 0-2.8 1.6-4.7 4-4.7 1.1 0 1.8.6 3.3.6s2.2-.6 3.300-.6c2.4 0 4 1.9 4 4.7 0 .5-.4.9-.9.9z" fill="none" stroke="#dc3545" stroke-width="1.8" stroke-linejoin="round"/></svg></td><td><svg class="ico" width="19" height="18" viewBox="0 0 512 512" preserveAspectRatio="none"><path fill="#6c757d" d="M448 0H64C28.7 0 0 28.7 0 64v288c0 35.3 28.7 64 64 64h96v84c0 9.8 11.2 15.5 19.1 9.7L304 416h144c35.3 0 64-28.7 64-64V64c0-35.3-28.7-64-64-64z"/></svg></td><td><svg class="ico cam" width="21" height="17" viewBox="0 0 21 17"><path d="M7.2 1.2h6.6l1.3 2.3h3.4c.9 0 1.6.7 1.6 1.6v9.2c0 .9-.7 1.6-1.6 1.6H2.5c-.9 0-1.6-.7-1.6-1.6V5.1c0-.9.7-1.6 1.6-1.6h3.4z" fill="#8a8a8a" stroke="#222" stroke-width="1.3" stroke-linejoin="round"/><circle cx="10.5" cy="9.6" r="4" fill="#777" stroke="#fff" stroke-width="1"/><circle cx="10.5" cy="9.6" r="2.2" fill="#fff" stroke="#666" stroke-width=".8"/></svg></td><td><svg class="ico" style="left:-1px" width="18" height="5" viewBox="0 0 18 5"><circle cx="2.3" cy="2.5" r="2.3" fill="#6c757d"/><circle cx="9" cy="2.5" r="2.3" fill="#6c757d"/><circle cx="15.7" cy="2.5" r="2.3" fill="#6c757d"/></svg></td><td></td><td class="act"><svg class="ico" width="19" height="19" viewBox="0 0 512 512"><path fill="#6c757d" d="M497.9 142.1l-46.1 46.1c-4.7 4.7-12.3 4.7-17 0l-111-111c-4.7-4.7-4.7-12.3 0-17l46.1-46.1c18.7-18.7 49.1-18.7 67.9 0l60.1 60.1c18.8 18.7 18.8 49.1 0 67.9zM284.2 99.8L21.6 362.4.4 483.9c-2.9 16.4 11.4 30.6 27.8 27.8l121.5-21.3 262.6-262.6c4.7-4.7 4.7-12.3 0-17l-111-111c-4.8-4.7-12.4-4.7-17.1 0zM124.1 339.9c-5.5-5.5-5.5-14.3 0-19.8l154-154c5.5-5.5 14.3-5.5 19.8 0s5.5 14.3 0 19.8l-154 154c-5.5 5.5-14.3 5.5-19.8 0zM88 424h48v36.3l-64.5 11.3-31.1-31.1L51.7 376H88v48z"/></svg><span style="display:inline-block;width:12px"></span><svg class="ico" width="13" height="13" viewBox="0 0 13 13"><path d="M1.8 1.8l9.4 9.4M11.2 1.8l-9.4 9.4" stroke="#6c757d" stroke-width="3.2" stroke-linecap="round"/></svg></td></tr>
<tr style="height:52px"><td><span class="cb"></span></td><td class="nb">17093103</td><td class="dt"><div>30-04-25</div><div>14:47</div></td><td></td><td><span style="position:relative;top:-0.5px;letter-spacing:.2px;display:inline-block;line-height:17.5px">подбор<br>полное</span></td><td><span class="lnk">212-951-480</span></td><td class="loc"><div class="lf"><svg class="ico" width="17" height="15" viewBox="0 0 576 512"><path fill="#6c757d" d="M288 0c-69.59 0-126 56.41-126 126 0 56.26 82.35 158.8 113.9 196.02 6.39 7.54 17.82 7.54 24.2 0C331.650 284.8 414 182.26 414 126 414 56.41 357.59 0 288 0zm0 168c-23.2 0-42-18.8-42-42s18.8-42 42-42 42 18.8 42 42-18.8 42-42 42zM20.12 215.95A32.006 32.006 0 0 0 0 245.66v250.32c0 11.32 11.43 19.06 21.94 14.86L160 448V214.92c-8.84-15.98-16.07-31.54-21.25-46.42L20.12 215.95zM288 359.67c-14.07 0-27.38-6.18-36.51-16.96-19.66-23.2-40.57-49.62-59.49-76.72v182l192 64V266c-18.92 27.09-39.82 53.52-59.49 76.72-9.13 10.77-22.44 16.95-36.51 16.95zm266.06-198.51L416 224v288l139.88-55.95A31.996 31.996 0 0 0 576 426.34V176.02c0-11.32-11.430-19.06-21.94-14.86z"/></svg><div class="lt">Киев, Шевченковский</div></div></td><td class="pr">107 000 $</td><td>2</td><td>51/ 18/<br>18</td><td class="et">17/<br>23</td><td></td><td></td><td><svg class="ico" width="18" height="18" viewBox="0 0 512 512"><path fill="#6c757d" d="M256 8C119.043 8 8 119.083 8 256c0 136.997 111.043 248 248 248s248-111.003 248-248C504 119.083 392.957 8 256 8zm0 110c23.196 0 42 18.804 42 42s-18.804 42-42 42-42-18.804-42-42 18.804-42 42-42zm56 254c0 6.627-5.373 12-12 12h-88c-6.627 0-12-5.373-12-12v-24c0-6.627 5.373-12 12-12h12v-64h-12c-6.627 0-12-5.373-12-12v-24c0-6.627 5.373-12 12-12h64c6.627 0 12 5.373 12 12v100h12c6.627 0 12 5.373 12 12v24z"/></svg></td><td class="src"><b class="lnk" style="font-size:14px;position:relative;top:0.5px">и</b></td><td class="dd"><b>Д</b>:31-05-24</td><td><svg class="ico" width="17" height="19" viewBox="0 0 17 19"><circle cx="8.5" cy="5.3" r="4" fill="none" stroke="#dc3545" stroke-width="1.8"/><path d="M2.1 17.2c-.5 0-.9-.4-.9-.9 0-2.8 1.6-4.7 4-4.7 1.1 0 1.8.6 3.3.6s2.2-.6 3.300-.6c2.4 0 4 1.9 4 4.7 0 .5-.4.9-.9.9z" fill="none" stroke="#dc3545" stroke-width="1.8" stroke-linejoin="round"/></svg></td><td><svg class="ico" width="19" height="18" viewBox="0 0 512 512" preserveAspectRatio="none"><path fill="#6c757d" d="M448 0H64C28.7 0 0 28.7 0 64v288c0 35.3 28.7 64 64 64h96v84c0 9.8 11.2 15.5 19.1 9.7L304 416h144c35.3 0 64-28.7 64-64V64c0-35.3-28.7-64-64-64z"/></svg></td><td><svg class="ico cam" width="21" height="17" viewBox="0 0 21 17"><path d="M7.2 1.2h6.6l1.3 2.3h3.4c.9 0 1.6.7 1.6 1.6v9.2c0 .9-.7 1.6-1.6 1.6H2.5c-.9 0-1.6-.7-1.6-1.6V5.1c0-.9.7-1.6 1.6-1.6h3.4z" fill="#8a8a8a" stroke="#222" stroke-width="1.3" stroke-linejoin="round"/><circle cx="10.5" cy="9.6" r="4" fill="#777" stroke="#fff" stroke-width="1"/><circle cx="10.5" cy="9.6" r="2.2" fill="#fff" stroke="#666" stroke-width=".8"/></svg></td><td><svg class="ico" style="left:-1px" width="18" height="5" viewBox="0 0 18 5"><circle cx="2.3" cy="2.5" r="2.3" fill="#6c757d"/><circle cx="9" cy="2.5" r="2.3" fill="#6c757d"/><circle cx="15.7" cy="2.5" r="2.3" fill="#6c757d"/></svg></td><td></td><td class="act"><svg class="ico" width="19" height="19" viewBox="0 0 512 512"><path fill="#6c757d" d="M497.9 142.1l-46.1 46.1c-4.7 4.7-12.3 4.7-17 0l-111-111c-4.7-4.7-4.7-12.3 0-17l46.1-46.1c18.7-18.7 49.1-18.7 67.9 0l60.1 60.1c18.8 18.7 18.8 49.1 0 67.9zM284.2 99.8L21.6 362.4.4 483.9c-2.9 16.4 11.4 30.6 27.8 27.8l121.5-21.3 262.6-262.6c4.7-4.7 4.7-12.3 0-17l-111-111c-4.8-4.7-12.4-4.7-17.1 0zM124.1 339.9c-5.5-5.5-5.5-14.3 0-19.8l154-154c5.5-5.5 14.3-5.5 19.8 0s5.5 14.3 0 19.8l-154 154c-5.5 5.5-14.3 5.5-19.8 0zM88 424h48v36.3l-64.5 11.3-31.1-31.1L51.7 376H88v48z"/></svg><span style="display:inline-block;width:12px"></span><svg class="ico" width="13" height="13" viewBox="0 0 13 13"><path d="M1.8 1.8l9.4 9.4M11.2 1.8l-9.4 9.4" stroke="#6c757d" stroke-width="3.2" stroke-linecap="round"/></svg></td></tr>
<tr class="g" style="height:78px"><td><span class="cb" style="top:-0.5px"></span></td><td class="nb"><span style="color:#28a745">17093102</span><br><span style="display:inline-block;margin-top:1px"><svg class="ico" width="16" height="15" viewBox="0 0 512 512"><path fill="#007bff" d="M326.612 185.391c59.747 59.809 58.927 155.698.36 214.59-.11.12-.24.25-.36.37l-67.2 67.2c-59.27 59.27-155.699 59.262-214.96 0-59.27-59.26-59.27-155.7 0-214.96l37.106-37.106c9.84-9.84 26.786-3.3 27.294 10.606.648 17.722 3.826 35.527 9.69 52.721 1.986 5.822.567 12.262-3.783 16.612l-13.087 13.087c-28.026 28.026-28.905 73.66-1.155 101.96 28.024 28.579 74.086 28.749 102.325.51l67.2-67.19c28.191-28.191 28.073-73.757 0-101.83-3.701-3.694-7.429-6.564-10.341-8.569a16.037 16.037 0 0 1-6.947-12.606c-.396-10.567 3.348-21.456 11.698-29.806l21.054-21.055c5.521-5.521 14.182-6.199 20.584-1.731a152.482 152.482 0 0 1 20.522 17.197zM467.547 44.449c-59.261-59.262-155.69-59.27-214.96 0l-67.2 67.2c-.12.12-.25.25-.36.37-58.566 58.892-59.387 154.781.36 214.59a152.454 152.454 0 0 0 20.521 17.196c6.402 4.468 15.064 3.789 20.584-1.731l21.054-21.055c8.35-8.35 12.094-19.239 11.698-29.806a16.037 16.037 0 0 0-6.947-12.606c-2.912-2.005-6.64-4.875-10.341-8.569-28.073-28.073-28.191-73.639 0-101.83l67.2-67.19c28.239-28.239 74.3-28.069 102.325.51 27.75 28.3 26.872 73.934-1.155 101.96l-13.087 13.087c-4.35 4.35-5.769 10.79-3.783 16.612 5.864 17.194 9.042 34.999 9.69 52.721.509 13.906 17.454 20.446 27.294 10.606l37.106-37.106c59.271-59.259 59.271-155.699.001-214.959z"/></svg></span></td><td class="dt"><div>30-04-25</div><div>14:47</div></td><td></td><td><span style="position:relative;top:-0.5px;letter-spacing:.2px;display:inline-block;line-height:17.5px">подбор<br>полное</span></td><td><span class="lnk">212-952-729</span></td><td class="loc"><div class="lf"><svg class="ico" width="17" height="15" viewBox="0 0 576 512"><path fill="#6c757d" d="M288 0c-69.59 0-126 56.41-126 126 0 56.26 82.35 158.8 113.9 196.02 6.39 7.54 17.82 7.54 24.2 0C331.650 284.8 414 182.26 414 126 414 56.41 357.59 0 288 0zm0 168c-23.2 0-42-18.8-42-42s18.8-42 42-42 42 18.8 42 42-18.8 42-42 42zM20.12 215.95A32.006 32.006 0 0 0 0 245.66v250.32c0 11.32 11.43 19.06 21.94 14.86L160 448V214.92c-8.84-15.98-16.07-31.54-21.25-46.42L20.12 215.95zM288 359.67c-14.07 0-27.38-6.18-36.51-16.96-19.66-23.2-40.57-49.62-59.49-76.72v182l192 64V266c-18.92 27.09-39.82 53.52-59.49 76.72-9.13 10.77-22.44 16.95-36.51 16.95zm266.06-198.51L416 224v288l139.88-55.95A31.996 31.996 0 0 0 576 426.34V176.02c0-11.32-11.430-19.06-21.94-14.86z"/></svg><div class="lt">Киев, Шевченковский,<br>Берестейський просп.<br>(Перемоги), 10,<br>Шулявская</div></div></td><td class="pr">87 000 $</td><td>1</td><td>44/ -/ 12</td><td class="et">9/<br>25</td><td></td><td></td><td><svg class="ico" width="18" height="18" viewBox="0 0 512 512"><path fill="#6c757d" d="M256 8C119.043 8 8 119.083 8 256c0 136.997 111.043 248 248 248s248-111.003 248-248C504 119.083 392.957 8 256 8zm0 110c23.196 0 42 18.804 42 42s-18.804 42-42 42-42-18.804-42-42 18.804-42 42-42zm56 254c0 6.627-5.373 12-12 12h-88c-6.627 0-12-5.373-12-12v-24c0-6.627 5.373-12 12-12h12v-64h-12c-6.627 0-12-5.373-12-12v-24c0-6.627 5.373-12 12-12h64c6.627 0 12 5.373 12 12v100h12c6.627 0 12 5.373 12 12v24z"/></svg></td><td class="src"><span class="lk6"><svg class="ico" width="20" height="18" viewBox="0 0 512 512"><path fill="#007bff" d="M326.612 185.391c59.747 59.809 58.927 155.698.36 214.59-.11.12-.24.25-.36.37l-67.2 67.2c-59.27 59.27-155.699 59.262-214.96 0-59.27-59.26-59.27-155.7 0-214.96l37.106-37.106c9.84-9.84 26.786-3.3 27.294 10.606.648 17.722 3.826 35.527 9.69 52.721 1.986 5.822.567 12.262-3.783 16.612l-13.087 13.087c-28.026 28.026-28.905 73.66-1.155 101.96 28.024 28.579 74.086 28.749 102.325.51l67.2-67.19c28.191-28.191 28.073-73.757 0-101.83-3.701-3.694-7.429-6.564-10.341-8.569a16.037 16.037 0 0 1-6.947-12.606c-.396-10.567 3.348-21.456 11.698-29.806l21.054-21.055c5.521-5.521 14.182-6.199 20.584-1.731a152.482 152.482 0 0 1 20.522 17.197zM467.547 44.449c-59.261-59.262-155.69-59.27-214.96 0l-67.2 67.2c-.12.12-.25.25-.36.37-58.566 58.892-59.387 154.781.36 214.59a152.454 152.454 0 0 0 20.521 17.196c6.402 4.468 15.064 3.789 20.584-1.731l21.054-21.055c8.35-8.35 12.094-19.239 11.698-29.806a16.037 16.037 0 0 0-6.947-12.606c-2.912-2.005-6.64-4.875-10.341-8.569-28.073-28.073-28.191-73.639 0-101.83l67.2-67.19c28.239-28.239 74.3-28.069 102.325.51 27.75 28.3 26.872 73.934-1.155 101.96l-13.087 13.087c-4.35 4.35-5.769 10.79-3.783 16.612 5.864 17.194 9.042 34.999 9.69 52.721.509 13.906 17.454 20.446 27.294 10.606l37.106-37.106c59.271-59.259 59.271-155.699.001-214.959z"/></svg></span><b class="lnk" style="font-size:14px;position:relative;top:0.5px">и</b></td><td class="dd"><b>Д</b>:04-06-24</td><td><svg class="ico" width="17" height="19" viewBox="0 0 17 19"><circle cx="8.5" cy="5.3" r="4" fill="none" stroke="#dc3545" stroke-width="1.8"/><path d="M2.1 17.2c-.5 0-.9-.4-.9-.9 0-2.8 1.6-4.7 4-4.7 1.1 0 1.8.6 3.3.6s2.2-.6 3.300-.6c2.4 0 4 1.9 4 4.7 0 .5-.4.9-.9.9z" fill="none" stroke="#dc3545" stroke-width="1.8" stroke-linejoin="round"/></svg></td><td><svg class="ico" width="16" height="16" viewBox="0 32 448 448"><path fill="#6c757d" d="M400 32H48C21.49 32 0 53.49 0 80v352c0 26.51 21.49 48 48 48h352c26.51 0 48-21.49 48-48V80c0-26.51-21.49-48-48-48zM94 416c-7.033 0-13.057-4.873-14.616-11.627l-14.998-65a15 15 0 0 1 8.707-17.16l69.998-29.999a15 15 0 0 1 17.518 4.289l30.997 37.885c48.944-22.963 88.297-62.858 110.781-110.78l-37.886-30.997a15.001 15.001 0 0 1-4.289-17.518l30-69.998a15 15 0 0 1 17.16-8.707l65 14.998A14.997 14.997 0 0 1 384 126c0 160.292-129.945 290-290 290z"/></svg><span style="display:inline-block;width:8px"></span><svg class="ico" width="19" height="18" viewBox="0 0 512 512" preserveAspectRatio="none"><path fill="#6c757d" d="M448 0H64C28.7 0 0 28.7 0 64v288c0 35.3 28.7 64 64 64h96v84c0 9.8 11.2 15.5 19.1 9.7L304 416h144c35.3 0 64-28.7 64-64V64c0-35.3-28.7-64-64-64z"/></svg></td><td><svg class="ico cam" width="21" height="17" viewBox="0 0 21 17"><path d="M7.2 1.2h6.6l1.3 2.3h3.4c.9 0 1.6.7 1.6 1.6v9.2c0 .9-.7 1.6-1.6 1.6H2.5c-.9 0-1.6-.7-1.6-1.6V5.1c0-.9.7-1.6 1.6-1.6h3.4z" fill="#8a8a8a" stroke="#222" stroke-width="1.3" stroke-linejoin="round"/><circle cx="10.5" cy="9.6" r="4" fill="#777" stroke="#fff" stroke-width="1"/><circle cx="10.5" cy="9.6" r="2.2" fill="#fff" stroke="#666" stroke-width=".8"/></svg></td><td><svg class="ico" style="left:-1px" width="18" height="5" viewBox="0 0 18 5"><circle cx="2.3" cy="2.5" r="2.3" fill="#6c757d"/><circle cx="9" cy="2.5" r="2.3" fill="#6c757d"/><circle cx="15.7" cy="2.5" r="2.3" fill="#6c757d"/></svg></td><td></td><td class="act"><svg class="ico" width="19" height="19" viewBox="0 0 512 512"><path fill="#6c757d" d="M497.9 142.1l-46.1 46.1c-4.7 4.7-12.3 4.7-17 0l-111-111c-4.7-4.7-4.7-12.3 0-17l46.1-46.1c18.7-18.7 49.1-18.7 67.9 0l60.1 60.1c18.8 18.7 18.8 49.1 0 67.9zM284.2 99.8L21.6 362.4.4 483.9c-2.9 16.4 11.4 30.6 27.8 27.8l121.5-21.3 262.6-262.6c4.7-4.7 4.7-12.3 0-17l-111-111c-4.8-4.7-12.4-4.7-17.1 0zM124.1 339.9c-5.5-5.5-5.5-14.3 0-19.8l154-154c5.5-5.5 14.3-5.5 19.8 0s5.5 14.3 0 19.8l-154 154c-5.5 5.5-14.3 5.5-19.8 0zM88 424h48v36.3l-64.5 11.3-31.1-31.1L51.7 376H88v48z"/></svg><span style="display:inline-block;width:12px"></span><svg class="ico" width="13" height="13" viewBox="0 0 13 13"><path d="M1.8 1.8l9.4 9.4M11.2 1.8l-9.4 9.4" stroke="#6c757d" stroke-width="3.2" stroke-linecap="round"/></svg></td></tr>
<tr style="height:60px"><td><span class="cb"></span></td><td class="nb">17093101</td><td class="dt"><div>30-04-25</div><div>14:47</div></td><td></td><td><span style="position:relative;top:-0.5px;letter-spacing:.2px;display:inline-block;line-height:17.5px">подбор<br>полное</span></td><td><span class="lnk">212-952-730</span></td><td class="loc"><div class="lf"><svg class="ico" width="17" height="15" viewBox="0 0 576 512"><path fill="#6c757d" d="M288 0c-69.59 0-126 56.41-126 126 0 56.26 82.35 158.8 113.9 196.02 6.39 7.54 17.82 7.54 24.2 0C331.650 284.8 414 182.26 414 126 414 56.41 357.59 0 288 0zm0 168c-23.2 0-42-18.8-42-42s18.8-42 42-42 42 18.8 42 42-18.8 42-42 42zM20.12 215.95A32.006 32.006 0 0 0 0 245.66v250.32c0 11.32 11.43 19.06 21.94 14.86L160 448V214.92c-8.84-15.98-16.07-31.54-21.25-46.42L20.12 215.95zM288 359.67c-14.07 0-27.38-6.18-36.51-16.96-19.66-23.2-40.57-49.62-59.49-76.72v182l192 64V266c-18.92 27.09-39.82 53.52-59.49 76.72-9.13 10.77-22.44 16.95-36.51 16.95zm266.06-198.51L416 224v288l139.88-55.95A31.996 31.996 0 0 0 576 426.34V176.02c0-11.32-11.430-19.06-21.94-14.86z"/></svg><div class="lt">Киев, Шевченковский</div></div></td><td class="pr">95 000 $</td><td>2</td><td>79.7 /<br>40 /<br>12</td><td class="et">3/<br>9</td><td></td><td></td><td><svg class="ico" width="18" height="18" viewBox="0 0 512 512"><path fill="#6c757d" d="M256 8C119.043 8 8 119.083 8 256c0 136.997 111.043 248 248 248s248-111.003 248-248C504 119.083 392.957 8 256 8zm0 110c23.196 0 42 18.804 42 42s-18.804 42-42 42-42-18.804-42-42 18.804-42 42-42zm56 254c0 6.627-5.373 12-12 12h-88c-6.627 0-12-5.373-12-12v-24c0-6.627 5.373-12 12-12h12v-64h-12c-6.627 0-12-5.373-12-12v-24c0-6.627 5.373-12 12-12h64c6.627 0 12 5.373 12 12v100h12c6.627 0 12 5.373 12 12v24z"/></svg></td><td class="src"><b class="lnk" style="font-size:14px;position:relative;top:0.5px">и</b></td><td class="dd"><b>Д</b>:04-06-24</td><td><svg class="ico" width="17" height="19" viewBox="0 0 17 19"><circle cx="8.5" cy="5.3" r="4" fill="none" stroke="#dc3545" stroke-width="1.8"/><path d="M2.1 17.2c-.5 0-.9-.4-.9-.9 0-2.8 1.6-4.7 4-4.7 1.1 0 1.8.6 3.3.6s2.2-.6 3.300-.6c2.4 0 4 1.9 4 4.7 0 .5-.4.9-.9.9z" fill="none" stroke="#dc3545" stroke-width="1.8" stroke-linejoin="round"/></svg></td><td><svg class="ico" width="19" height="18" viewBox="0 0 512 512" preserveAspectRatio="none"><path fill="#6c757d" d="M448 0H64C28.7 0 0 28.7 0 64v288c0 35.3 28.7 64 64 64h96v84c0 9.8 11.2 15.5 19.1 9.7L304 416h144c35.3 0 64-28.7 64-64V64c0-35.3-28.7-64-64-64z"/></svg></td><td><svg class="ico cam" width="21" height="17" viewBox="0 0 21 17"><path d="M7.2 1.2h6.6l1.3 2.3h3.4c.9 0 1.6.7 1.6 1.6v9.2c0 .9-.7 1.6-1.6 1.6H2.5c-.9 0-1.6-.7-1.6-1.6V5.1c0-.9.7-1.6 1.6-1.6h3.4z" fill="#8a8a8a" stroke="#222" stroke-width="1.3" stroke-linejoin="round"/><circle cx="10.5" cy="9.6" r="4" fill="#777" stroke="#fff" stroke-width="1"/><circle cx="10.5" cy="9.6" r="2.2" fill="#fff" stroke="#666" stroke-width=".8"/></svg></td><td><svg class="ico" style="left:-1px" width="18" height="5" viewBox="0 0 18 5"><circle cx="2.3" cy="2.5" r="2.3" fill="#6c757d"/><circle cx="9" cy="2.5" r="2.3" fill="#6c757d"/><circle cx="15.7" cy="2.5" r="2.3" fill="#6c757d"/></svg></td><td></td><td class="act"><svg class="ico" width="19" height="19" viewBox="0 0 512 512"><path fill="#6c757d" d="M497.9 142.1l-46.1 46.1c-4.7 4.7-12.3 4.7-17 0l-111-111c-4.7-4.7-4.7-12.3 0-17l46.1-46.1c18.7-18.7 49.1-18.7 67.9 0l60.1 60.1c18.8 18.7 18.8 49.1 0 67.9zM284.2 99.8L21.6 362.4.4 483.9c-2.9 16.4 11.4 30.6 27.8 27.8l121.5-21.3 262.6-262.6c4.7-4.7 4.7-12.3 0-17l-111-111c-4.8-4.7-12.4-4.7-17.1 0zM124.1 339.9c-5.5-5.5-5.5-14.3 0-19.8l154-154c5.5-5.5 14.3-5.5 19.8 0s5.5 14.3 0 19.8l-154 154c-5.5 5.5-14.3 5.5-19.8 0zM88 424h48v36.3l-64.5 11.3-31.1-31.1L51.7 376H88v48z"/></svg><span style="display:inline-block;width:12px"></span><svg class="ico" width="13" height="13" viewBox="0 0 13 13"><path d="M1.8 1.8l9.4 9.4M11.2 1.8l-9.4 9.4" stroke="#6c757d" stroke-width="3.2" stroke-linecap="round"/></svg></td></tr>
</table>

</body></html>
